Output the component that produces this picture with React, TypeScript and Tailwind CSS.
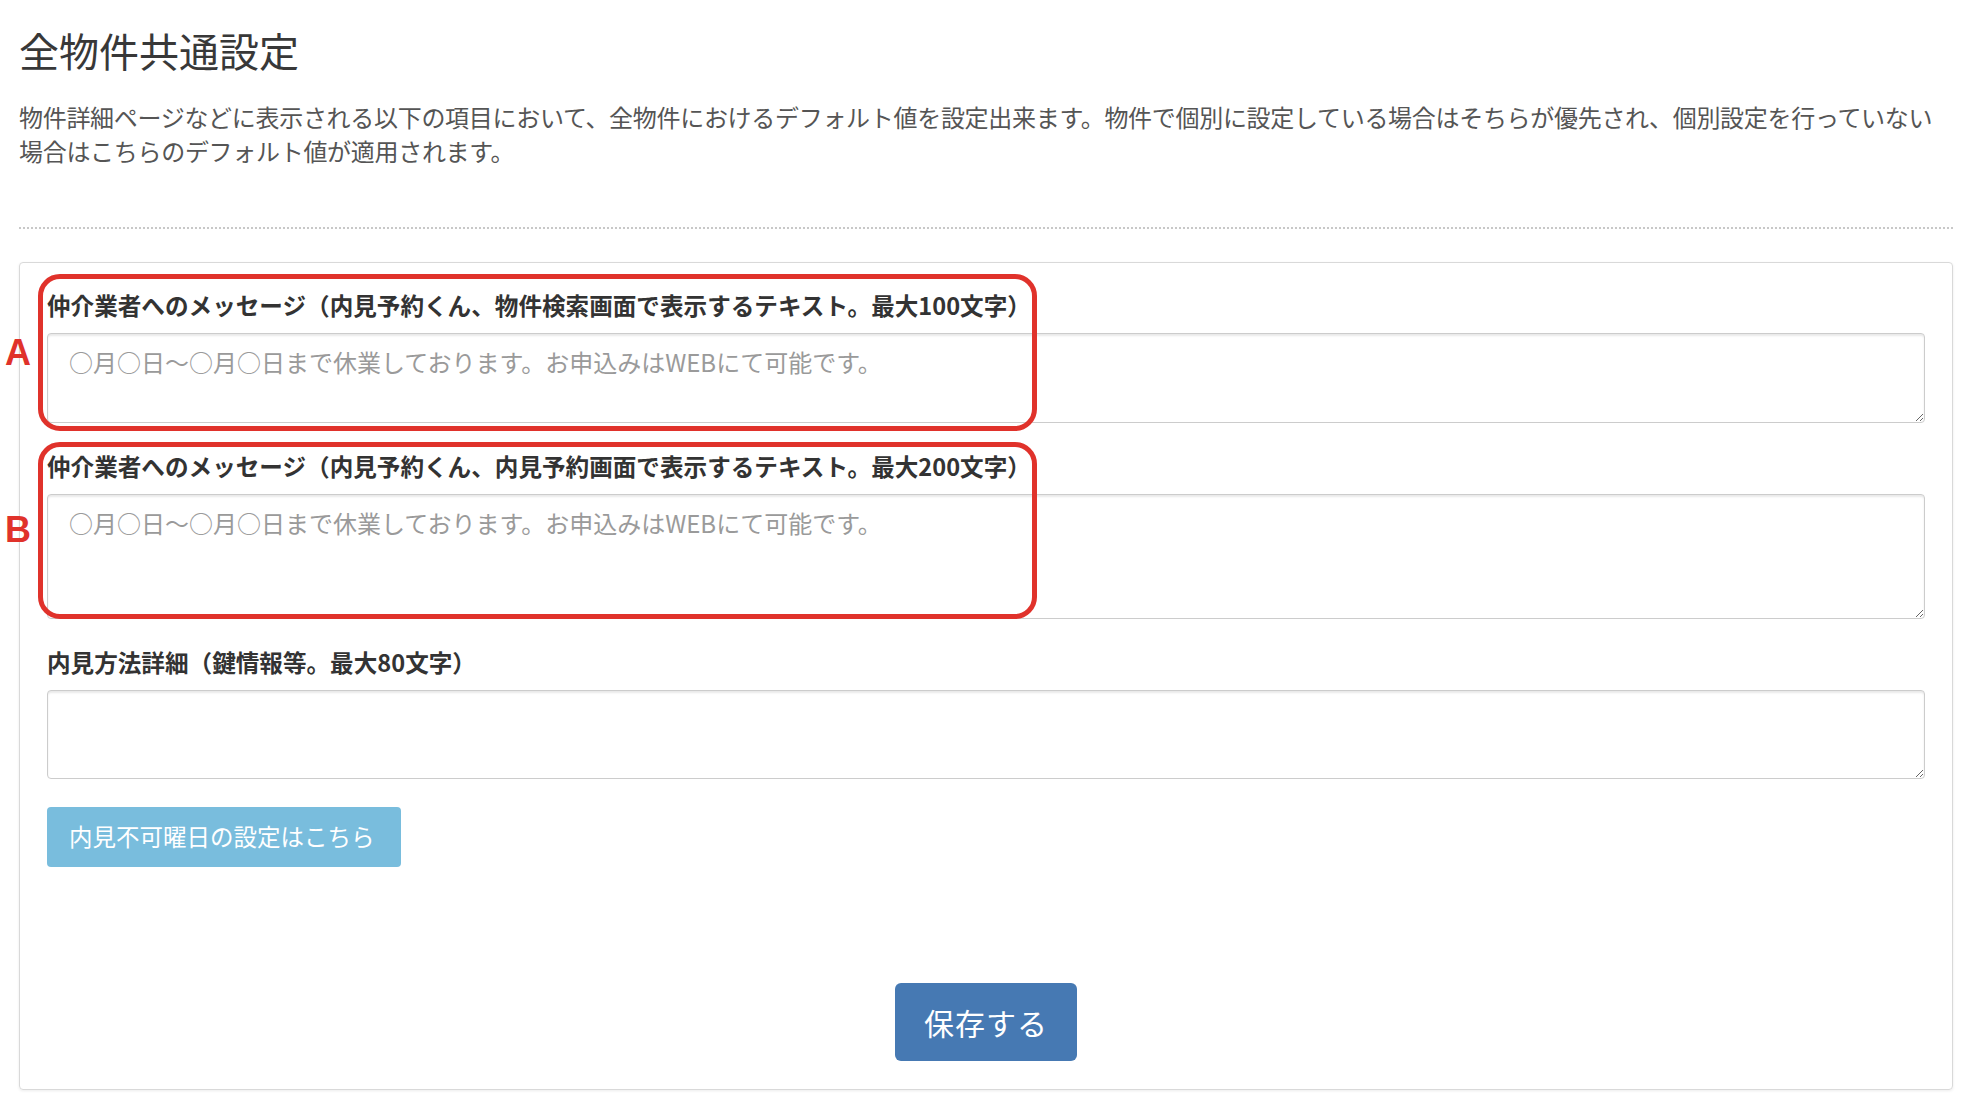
const jp = { fontFamily: '"Noto Sans CJK JP", "Noto Sans", sans-serif' }
const latin = { fontFamily: '"Liberation Sans", Arial, sans-serif' }

const placeholder = "○月○日〜○月○日まで休業しております。お申込みはWEBにて可能です。"

function Field(props: { label: string; height: string; ph?: string }) {
  return (
    <div className="flex flex-col gap-[13px]">
      <div className="text-[23.6px] leading-[30px] font-bold text-[#333]">{props.label}</div>
      <textarea
        className={`block w-full ${props.height} border border-[#ccc] rounded-[4px] px-[21px] py-[13px] text-[24px] leading-[30px] text-[#555] placeholder:text-[#9a9a9a] shadow-[inset_0_2px_2px_rgba(0,0,0,0.09)] outline-none bg-white`}
        placeholder={props.ph}
        style={jp}
      />
    </div>
  )
}

export default function App() {
  return (
    <div className="min-h-[1098px] bg-white pl-[19px] pr-[23px] pt-[26px]" style={jp}>
      <h1 className="text-[40px] leading-[48px] font-normal text-[#383838]">全物件共通設定</h1>
      <p className="mt-[26px] text-[24px] leading-[34px] tracking-[-0.3px] text-[#555]">
        物件詳細ページなどに表示される以下の項目において、全物件におけるデフォルト値を設定出来ます。物件で個別に設定している場合はそちらが優先され、個別設定を行っていない場合はこちらのデフォルト値が適用されます。
      </p>
      <div className="mt-[59px] border-t-2 border-dotted border-[#c8c8c8]" />

      <div className="relative mt-[33px] border border-[#d9d9d9] rounded-[4px] shadow-[0_1px_3px_rgba(0,0,0,0.08)] px-[27px] pt-[27px] pb-[28px] flex flex-col">
        <div className="flex flex-col gap-[28px]">
          <Field height="h-[90px]" ph={placeholder}
            label="仲介業者へのメッセージ（内見予約くん、物件検索画面で表示するテキスト。最大100文字）" />
          <Field height="h-[125px]" ph={placeholder}
            label="仲介業者へのメッセージ（内見予約くん、内見予約画面で表示するテキスト。最大200文字）" />
          <Field height="h-[89px]"
            label="内見方法詳細（鍵情報等。最大80文字）" />
          <div>
            <button className="h-[60px] w-[354px] rounded-[4px] bg-[#79bddd] text-white text-[23.5px] text-left pl-[22px]">
              内見不可曜日の設定はこちら
            </button>
          </div>
        </div>

        <div className="mt-[116px] flex justify-center">
          <button className="h-[78px] w-[182px] rounded-[6px] bg-[#4679b3] text-white text-[30px] tracking-[1px]">
            保存する
          </button>
        </div>

        {/* red annotation frames drawn over the form */}
        <div className="absolute left-[18px] top-[11px] w-[999px] h-[157px] border-[5px] border-[#e0322b] rounded-[22px] pointer-events-none" />
        <div className="absolute left-[18px] top-[179px] w-[999px] h-[177px] border-[5px] border-[#e0322b] rounded-[22px] pointer-events-none" />
        <div className="absolute left-[-15px] top-[72px] text-[36px] leading-[36px] font-bold text-[#e0322b]" style={latin}>A</div>
        <div className="absolute left-[-15px] top-[249px] text-[36px] leading-[36px] font-bold text-[#e0322b]" style={latin}>B</div>
      </div>
    </div>
  )
}
